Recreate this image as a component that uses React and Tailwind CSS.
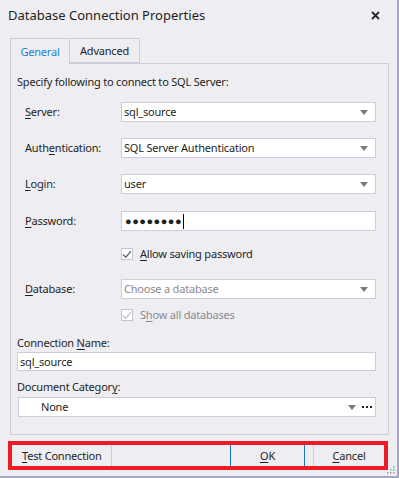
import React from "react";

const font = { fontFamily: '"Noto Sans", "Liberation Sans", sans-serif' };

function Arrow() {
  return (
    <svg width="8" height="5" viewBox="0 0 8 5" className="shrink-0">
      <path d="M0 0 H8 L4 5 Z" fill="#7a7a80" />
    </svg>
  );
}

function Check({ disabled }) {
  return (
    <span className="w-[12px] h-[12px] border border-[#c2c4d2] bg-white flex items-center justify-center shrink-0">
      <svg width="10" height="9" viewBox="0 0 10 9">
        <path
          d="M1 4.5 L3.8 7.3 L9 1.2"
          fill="none"
          stroke={disabled ? "#c6c6cc" : "#6a6a70"}
          strokeWidth="1.4"
        />
      </svg>
    </span>
  );
}

function U({ children }) {
  return <span className="underline underline-offset-2">{children}</span>;
}

function Combo({ children, muted }) {
  return (
    <div className="h-[20px] flex-1 bg-white border border-[#cccedb] flex items-center pl-[2px] pr-[7px]">
      <span className={`flex-1 ${muted ? "text-[#8a8a90]" : "text-[#1e1e1e]"}`}>{children}</span>
      <Arrow />
    </div>
  );
}

function Row({ label, children, className = "" }) {
  return (
    <div className={`flex items-center pl-[8px] ${className}`}>
      <span className="w-[96px] shrink-0">{label}</span>
      {children}
    </div>
  );
}

export default function App() {
  return (
    <div
      className="w-[399px] h-[478px] bg-[#eeeef2] text-[#1e1e1e] text-[11px] tracking-[-0.2px] leading-[16px] relative border-r-2 border-b-2 border-[#a5a8c4]"
      style={font}
    >
      <div className="h-[30px] flex items-center pl-[8px] pr-[17px]">
        <span className="flex-1 text-[13px] tracking-normal leading-[20px]">Database Connection Properties</span>
        <svg width="9" height="9" viewBox="0 0 9 9">
          <path d="M1 1 L8 8 M8 1 L1 8" stroke="#2a2a2a" strokeWidth="1.8" />
        </svg>
      </div>

      <div className="flex pl-[10px] mt-[8px] h-[25px]">
        <div className="w-[60px] border border-b-0 border-[#cccedb] flex items-center justify-center text-[#1a7fd4] relative z-10 bg-[#eeeef2] h-[26px]">
          General
        </div>
        <div className="w-[70px] border border-l-0 border-[#cccedb] flex items-center justify-center">
          Advanced
        </div>
      </div>

      <div className="ml-[10px] w-[379px] border border-[#cccedb] pl-[6px] pr-[12px] pt-[10px] pb-[17px] flex flex-col">
        <div>Specify following to connect to SQL Server:</div>

        <Row className="mt-[12px]" label={<><U>S</U>erver:</>}>
          <Combo>sql_source</Combo>
        </Row>
        <Row className="mt-[16px]" label={<>Auth<U>e</U>ntication:</>}>
          <Combo>SQL Server Authentication</Combo>
        </Row>
        <Row className="mt-[16px]" label={<><U>L</U>ogin:</>}>
          <Combo>user</Combo>
        </Row>
        <Row className="mt-[17px]" label={<><U>P</U>assword:</>}>
          <div className="h-[20px] flex-1 bg-white border border-[#cccedb] flex items-center pl-[3px]">
            <span className="text-[11px] tracking-[0.5px]">●●●●●●●●</span>
            <span className="w-px h-[15px] bg-black ml-[1px]" />
          </div>
        </Row>
        <div className="mt-[15px] flex items-center gap-[7px] pl-[104px] h-[16px]">
          <Check />
          <span>
            <U>A</U>llow saving password
          </span>
        </div>
        <Row className="mt-[17px]" label={<><U>D</U>atabase:</>}>
          <Combo muted>Choose a database</Combo>
        </Row>
        <div className="mt-[8px] flex items-center gap-[7px] pl-[104px] h-[16px] text-[#8a8a90]">
          <Check disabled />
          <span>
            S<U>h</U>ow all databases
          </span>
        </div>

        <div className="mt-[12px]">
          Connection <U>N</U>ame:
        </div>
        <div className="mt-[1px] h-[19px] bg-white border border-[#cccedb] flex items-center pl-[2px]">
          sql_source
        </div>
        <div className="mt-[8px]">
          Document Categor<U>y</U>:
        </div>
        <div className="mt-[2px] ml-[1px] h-[20px] bg-white border border-[#cccedb] flex items-center pl-[22px] pr-[3px]">
          <span className="flex-1">None</span>
          <Arrow />
          <span className="flex gap-[2px] ml-[6px]">
            <span className="w-[2px] h-[2px] bg-[#222]" />
            <span className="w-[2px] h-[2px] bg-[#222]" />
            <span className="w-[2px] h-[2px] bg-[#222]" />
          </span>
        </div>
      </div>

      <div className="mt-[6px] ml-[8px] w-[380px] h-[29px] border-4 border-[#ed1c24] flex">
        <div className="w-[100px] border-r border-[#cccedb] flex items-center pl-[10px] whitespace-nowrap">
          <span>
            <U>T</U>est Connection
          </span>
        </div>
        <div className="w-[118px]" />
        <div className="w-[75px] border-x border-[#1a78c2] flex items-center justify-center">
          <span>
            <U>O</U>K
          </span>
        </div>
        <div className="w-[8px]" />
        <div className="flex-1 border-l border-[#cccedb] flex items-center justify-center">
          <span>
            <U>C</U>ancel
          </span>
        </div>
      </div>

      <svg width="8" height="8" viewBox="0 0 8 8" className="absolute right-[2px] bottom-[2px]">
        {[[6, 0], [6, 3], [3, 3], [6, 6], [3, 6], [0, 6]].map(([x, y], i) => (
          <rect key={i} x={x} y={y} width="1.5" height="1.5" fill="#9a9cb0" />
        ))}
      </svg>
    </div>
  );
}
